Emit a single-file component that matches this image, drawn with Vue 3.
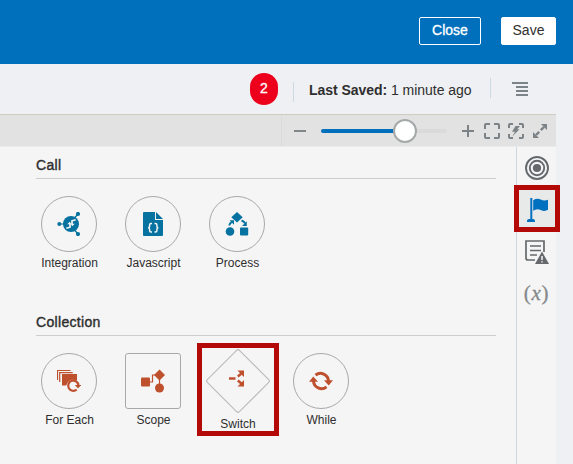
<script setup>
const callItems = [
  { name: 'Integration', icon: 'integration' },
  { name: 'Javascript', icon: 'javascript' },
  { name: 'Process', icon: 'process' },
]
const collectionItems = [
  { name: 'For Each', icon: 'foreach' },
  { name: 'Scope', icon: 'scope', shape: 'square' },
  { name: 'Switch', icon: 'switch', shape: 'diamond' },
  { name: 'While', icon: 'while' },
]
const sections = [
  { title: 'Call', items: callItems, kind: 'call' },
  { title: 'Collection', items: collectionItems, kind: 'collection' },
]
const zoom = 67
</script>

<template>
  <div class="page">
    <header class="header">
      <button class="btn outline">Close</button>
      <button class="btn solid">Save</button>
    </header>

    <div class="status">
      <span class="badge">2</span>
      <div class="saved"><span><b>Last Saved:</b> 1 minute ago</span></div>
      <div class="menu">
        <svg width="16" height="14" viewBox="0 0 16 14" fill="#7c8389">
          <path d="M0 0h16v2H0zM4 4h12v2H4zM4 8h12v2H4zM4 12h12v2H4z" />
        </svg>
      </div>
    </div>

    <div class="toolbar">
      <div class="tools">
        <svg class="minus" width="12" height="12" viewBox="0 0 12 12"><path d="M0 6h12" stroke="#82878a" stroke-width="2" /></svg>
        <div class="track">
          <div class="fill" :style="{ width: zoom + '%' }"></div>
          <div class="knob" :style="{ left: zoom + '%' }"></div>
        </div>
        <svg class="plus" width="12" height="12" viewBox="0 0 12 12"><path d="M0 6h12M6 0v12" stroke="#7c8286" stroke-width="2" /></svg>
        <svg class="fit" width="16" height="16" viewBox="0 0 16 16" fill="none" stroke="#7c8286" stroke-width="2">
          <path d="M1 6V2q0-1 1-1h4M10 1h4q1 0 1 1v4M15 10v4q0 1-1 1h-4M6 15H2q-1 0-1-1v-4" />
        </svg>
        <svg class="bolt" width="16" height="16" viewBox="0 0 16 16" fill="none" stroke="#7c8286" stroke-width="2">
          <path d="M1 5V2q0-1 1-1h3M11 1h3q1 0 1 1v3M15 11v3q0 1-1 1h-3M5 15H2q-1 0-1-1v-3" />
          <path d="M7.500 3H12L9.200 6.300h2.300L4.300 13.500 7 8.700H4z" fill="#7c8286" stroke="none" />
        </svg>
        <svg class="expand" width="14" height="14" viewBox="0 0 14 14">
          <path d="M3 11 6.200 7.800M7.800 6.200 11 3" stroke="#7c8286" stroke-width="2.400" />
          <path d="M14 0v6L8 0zM0 14V8l6 6z" fill="#7c8286" />
        </svg>
      </div>
    </div>

    <div class="body">
      <main class="palette">
        <section v-for="s in sections" :key="s.title" class="section" :class="s.kind">
          <h2>{{ s.title }}</h2>
          <div class="items">
            <div v-for="item in s.items" :key="item.name" class="item" :class="item.shape">
              <div v-if="item.shape !== 'diamond'" class="shape">
                <svg v-if="item.icon === 'integration'" width="24" height="24" viewBox="0 0 24 24" fill="#0572a0">
                  <path d="M2 12h8M14 10l7-8M14 14l7 8" stroke="#0572a0" stroke-width="1.200" />
                  <circle cx="2.300" cy="12" r="2" /><circle cx="21" cy="2" r="2.100" /><circle cx="21" cy="22" r="2.100" />
                  <circle cx="14" cy="12" r="8" />
                  <path d="M9.300 16.300 13 15.200V11.800M18.700 7.700 15 8.800v3.400" fill="none" stroke="#f5f5f5" stroke-width="1.700" />
                  <path d="M10.200 12.300h4.300l-1.700-2.500zM13.500 11.700h4.300l-2.600 2.500z" fill="#f5f5f5" />
                </svg>
                <svg v-else-if="item.icon === 'javascript'" width="20" height="24" viewBox="0 0 20 24" fill="#0572a0">
                  <path d="M1 0H12v8h8v15q0 1-1 1H1Q0 24 0 23V1Q0 0 1 0z" /><path d="M13 0l7 7h-7z" />
                  <path d="M9 11.500H8q-1.400 0-1.400 1.500v1.200q0 1.500-1.500 1.500 1.500 0 1.500 1.500v1.300q0 1.500 1.400 1.500h1M11.500 11.500h1q1.400 0 1.400 1.500v1.200q0 1.500 1.500 1.500-1.500 0-1.500 1.500v1.300q0 1.500-1.400 1.500h-1" fill="none" stroke="#f5f5f5" stroke-width="1.500" />
                </svg>
                <svg v-else-if="item.icon === 'process'" width="24" height="24" viewBox="0 0 24 24" fill="#0572a0">
                  <path d="M12 0l5.700 5.300L12 10.600 6.300 5.300z" />
                  <circle cx="5" cy="19.500" r="4.300" /><rect x="15" y="15.500" width="8.200" height="8" rx="1" />
                  <path d="M4.300 13.500Q4.500 11.300 6.700 10.200M16.500 8.500Q19.500 9.500 20 11.500" fill="none" stroke="#0572a0" stroke-width="2" />
                  <path d="M4.500 8.200H9v4.500zM21.800 9.300v4.800H17z" />
                </svg>
                <svg v-else-if="item.icon === 'foreach'" width="24" height="24" viewBox="0 0 24 24" fill="none" stroke="#bf502e">
                  <path d="M.5 11V1.500h13M2.700 13V3.700h13" stroke-width="1.200" />
                  <path d="M5 5h15v6.500q-8-3-10.800 5H5z" fill="#bf502e" stroke="none" />
                  <path d="M19.700 20.500a5.100 5.100 0 1 1 1.700-4.200" stroke-width="2.200" />
                  <path d="M17.800 16h6.400L21 19.500z" fill="#bf502e" stroke="none" />
                </svg>
                <svg v-else-if="item.icon === 'scope'" width="24" height="24" viewBox="0 0 24 24" fill="#bf502e">
                  <rect x="0" y="8.500" width="9" height="9" rx="1" />
                  <path d="M18.500.5 24 6l-5.500 5.500L13 6z" /><circle cx="18.500" cy="19" r="4.500" />
                  <path d="M9 13h2.500V6H14M18.500 10v6" fill="none" stroke="#bf502e" stroke-width="1.200" />
                </svg>
                <svg v-else width="24" height="24" viewBox="0 0 24 24" fill="none" stroke="#bf502e">
                  <path d="M6.500 6.200A8 8 0 0 1 19.500 12M17.500 17.800A8 8 0 0 1 4.500 12" stroke-width="3" />
                  <path d="M15 11.200h9l-4.300 5.200zM0 12.800h9L4.300 7.600z" fill="#bf502e" stroke="none" />
                </svg>
              </div>
              <svg v-else class="lozenge" width="64" height="64" viewBox="0 0 64 64">
                <path d="M30.600 1.300q1.400-1.400 2.800 0l29.300 29.300q1.400 1.400 0 2.800L33.400 62.700q-1.400 1.400-2.800 0L1.300 33.400q-1.400-1.400 0-2.800z" fill="none" stroke="#bbbcbb" stroke-width="1.200" />
                <path d="M23 29.500h6.500M31.800 27.500 36 24M31.800 31.500 36 35" fill="none" stroke="#bf502e" stroke-width="2.400" />
                <path d="M38 21.500v6.500l-6.500-6.500zM38 37.500V31l-6.500 6.500z" fill="#bf502e" />
              </svg>
              <span class="label">{{ item.name }}</span>
            </div>
          </div>
        </section>
      </main>

      <aside class="rail">
        <svg class="target" width="24" height="24" viewBox="0 0 24 24" fill="none" stroke="#65696c" stroke-width="1.900">
          <circle cx="12" cy="12" r="11" /><circle cx="12" cy="12" r="7.200" /><circle cx="12" cy="12" r="4.100" fill="#65696c" stroke="none" />
        </svg>
        <div class="active">
          <svg width="22" height="24" viewBox="0 0 22 24" fill="#0070bf">
            <path d="M3.300 0h2v21h-2z" /><path d="M0 24v-1.200Q0 21 2 21h4q2 0 2 1.800V24z" />
            <path d="M6.200 2.200q4-2.600 7.500-.6 3.500 1.900 7.300.2v10q-3.500 2.200-7.300.2-3.800-2-7.500.7z" />
          </svg>
        </div>
        <svg class="doc" width="24" height="24" viewBox="0 0 24 24" fill="none" stroke="#65696c" stroke-width="1.700">
          <path d="M10 20H3q-2 0-2-2V1h18v11M5 6h11M5 10.500h11M5 15h7" />
          <path d="M17 11.500 24 24H10z" fill="#65696c" stroke="none" />
          <path d="M17 16v4M17 21.200v1.400" stroke="#f5f5f5" stroke-width="1.500" />
        </svg>
        <div class="variable">(<i>x</i>)</div>
      </aside>
    </div>
  </div>
</template>

<style>
body { margin: 0; overflow: hidden; }
</style>

<style scoped>
.page { width: 573px; height: 464px; background: #eff0f3; font-family: "Liberation Sans", Arial, sans-serif; color: #2e2e2e; overflow: hidden; }
* { box-sizing: border-box; }
svg { display: block; flex: none; }
.header { height: 64px; background: #0070bd; display: flex; justify-content: flex-end; gap: 20px; padding: 17px 17px 0 0; }
.btn { height: 28px; border-radius: 2px; font: 14px/24px "Liberation Sans", Arial, sans-serif; padding: 0 0 2px; border: 1px solid #fff; }
.outline { width: 62px; background: transparent; color: #fff; -webkit-text-stroke: .3px #fff; }
.solid { width: 55px; background: #fff; color: #2e2e2e; }
.status { height: 50px; display: flex; align-items: flex-start; padding-left: 250px; font-size: 14px; }
.badge { width: 28px; height: 32px; margin-top: 9px; border-radius: 14px; background: #ed001c; color: #fff; text-align: center; line-height: 30px; -webkit-text-stroke: .3px #fff; }
.saved { margin: 18px 0 0 15px; height: 20px; width: 197px; border-left: 1px solid #cdd9e2; padding-left: 15px; line-height: 16px; white-space: nowrap; letter-spacing: -.04px; }
.menu { margin-top: 14px; height: 20px; border-left: 1px solid #cdd9e2; padding: 4px 0 0 21px; }
.toolbar { height: 33px; width: 556px; background: #e2e2e2; border-top: 1px solid #cfcdbf; border-bottom: 1px solid #e9ecec; display: flex; justify-content: flex-end; }
.tools { width: 275px; border-left: 1px solid #d9dada; display: flex; align-items: center; padding: 1px 0 0 12px; }
.track { position: relative; width: 126px; height: 4px; margin: 0 15px; border-radius: 2px; background: #dadada; }
.fill { height: 4px; border-radius: 2px; background: #0070bd; }
.knob { position: absolute; top: -10px; width: 24px; height: 24px; margin-left: -12px; border: 2px solid #a6a9aa; border-radius: 50%; background: #fff; }
.fit { margin-left: 10px; }
.bolt { margin-left: 8px; }
.expand { margin-left: 9px; }
.body { width: 556px; height: 317px; background: #f5f5f5; display: flex; }
.palette { width: 516px; padding: 10px 20px 0 36px; }
.section { height: 157px; }
h2 { margin: 0; height: 22px; border-bottom: 1px solid #cdcdcd; font-size: 14px; line-height: 16px; font-weight: 400; -webkit-text-stroke: .4px #2e2e2e; letter-spacing: .32px; }
.items { display: flex; padding-top: 17px; }
.item { width: 84px; display: flex; flex-direction: column; align-items: center; margin-left: -9px; margin-right: 9px; }
.shape { width: 56px; height: 56px; border: 1px solid #a7a8a8; border-radius: 50%; display: flex; align-items: center; justify-content: center; }
.square .shape { border-radius: 3px; }
.label { font-size: 12px; line-height: 14px; margin-top: 4px; padding-left: 1px; }
.diamond { width: 82px; height: 93px; margin: -10px 9px 0 -7px; border: 5px solid #b30a08; padding-top: 1px; }
.diamond .label { margin-top: 4px; padding-left: 0; }
.rail { width: 40px; border-left: 1px solid #cad8e4; display: flex; flex-direction: column; align-items: center; padding-top: 9px; }
.active { flex: none; width: 46px; height: 47px; margin-top: 5px; border: 5px solid #b30a08; background: #e8e9e9; display: flex; align-items: center; justify-content: center; padding: 2px 0 0 2px; }
.doc { margin-top: 8px; }
.variable { margin-top: 18px; height: 26px; font: 21px/22px "Liberation Serif", serif; color: #85888a; -webkit-text-stroke: .3px #85888a; letter-spacing: .7px; white-space: nowrap; }
</style>
